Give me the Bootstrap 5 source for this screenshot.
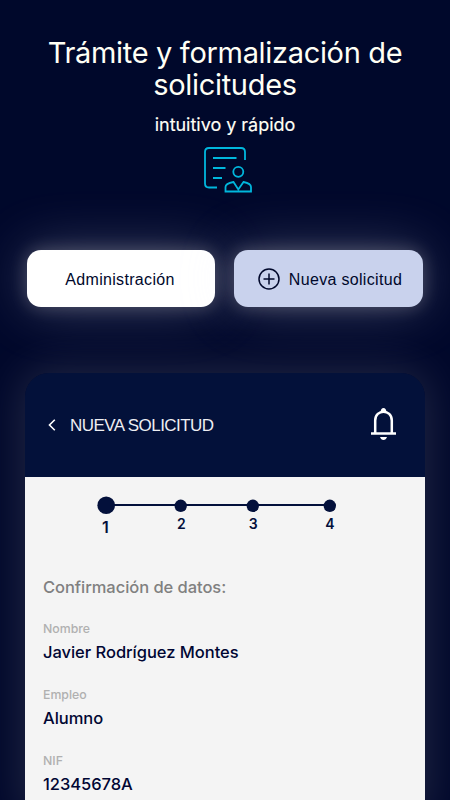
<!DOCTYPE html>
<html lang="es">
<head>
<meta charset="utf-8">
<meta name="viewport" content="width=device-width, initial-scale=1">
<title>Nueva solicitud</title>
<link href="https://cdn.jsdelivr.net/npm/bootstrap@5.3.0/dist/css/bootstrap.min.css" rel="stylesheet">
<style>
  body { background: #00082b; font-family: Inter, sans-serif; color: #000633; }
  .stage { width: 450px; height: 800px; }
  .hero { height: 250px; padding-top: 37px; color: #fffff5; }
  .hero h1 { font-size: 29px; line-height: 32px; font-weight: 400; letter-spacing: -.32px; }
  .hero-sub { font-size: 18px; line-height: 22px; margin-top: 13px; letter-spacing: -.02px; -webkit-text-stroke: .15px #fffff5; }
  .hero-icon { margin-top: 10px; transform: translateX(3px); }
  .actions { gap: 19px; padding: 0 27px; }
  .action { height: 57px; flex: 0 0 188px; border: 0; border-radius: 14px; padding: 0; font: 400 16px/20px "Liberation Sans", Arial, sans-serif; letter-spacing: .32px; color: #00082b; background: #fff; box-shadow: 0 0 18px rgba(255,248,240,.24), 0 0 56px rgba(235,235,255,.25); }
  .action:first-child { padding: 2px 2px 0 0; }
  .action-new { flex-basis: 189px; padding-left: 2px; background: #c9d2ed; }
  .action-new span { padding-top: 2px; }
  .phone { width: 400px; height: 440px; margin: 66px 25px 0; border-radius: 24px 24px 0 0; box-shadow: 0 0 44px 4px rgba(255,248,240,.13); background: linear-gradient(#03113a 104px, #f4f4f4 104px); }
  .phone-head { height: 104px; padding: 0 28px 0 23px; color: #fff; }
  .phone-title { font: 400 17px/20px "Liberation Sans", Arial, sans-serif; letter-spacing: -.55px; color: #eeeef2; padding-left: 14px; padding-top: 1px; }
  .steps { height: 100px; }
  .form-title { font-size: 16.5px; line-height: 21px; font-weight: 500; color: #808080; letter-spacing: -.05px; }
  .data { padding-left: 18px; }
  .field { height: 66px; }
  .field dt { font-size: 12.3px; line-height: 16px; font-weight: 500; color: #b0b0b0; }
  .field dd { font-size: 16.5px; line-height: 21px; font-weight: 500; margin: 5px 0 0; letter-spacing: -.03px; }
  dl { padding-top: 23px; }
</style>
<script src="https://cdn.jsdelivr.net/npm/bootstrap@5.3.0/dist/js/bootstrap.bundle.min.js"></script>
</head>
<body class="overflow-hidden">
<main class="stage overflow-hidden">
  <header class="hero text-center">
    <h1 class="m-0">Trámite y formalización de<br>solicitudes</h1>
    <p class="hero-sub mb-0">intuitivo y rápido</p>
    <svg class="hero-icon d-block mx-auto" width="50" height="48" viewBox="203 146 50 48" fill="none" stroke="#00b7dd" stroke-width="1.800">
      <path d="M217 187.500H209Q205 187.500 205 183.500V152Q205 148 209 148H241Q245 148 245 152V160"/>
      <path d="M213 158H236.500M213 168H225.500M213 178H222"/>
      <circle cx="238.300" cy="171.800" r="5"/>
      <path d="M233.500 182Q225.500 183.500 225.500 187V191.500H251V187Q251 183.500 243.500 182L238.300 189.500Z"/>
    </svg>
  </header>
  <div class="actions d-flex">
    <button class="action btn">Administración</button>
    <button class="action action-new btn d-flex align-items-center justify-content-center">
      <svg width="24" height="24" class="me-2" viewBox="0 0 24 24" fill="none" stroke="#00082b" stroke-width="1.500"><circle cx="12" cy="12" r="10"/><path d="M12 6.500V17.500M6.500 12H17.500"/></svg>
      <span>Nueva solicitud</span>
    </button>
  </div>
  <section class="phone">
    <div class="phone-head d-flex align-items-center">
      <svg width="8" height="12" viewBox="0 0 8 12" fill="none" stroke="#fff" stroke-width="1.600"><path d="M6.800 .8L1.500 6L6.800 11.200"/></svg>
      <span class="phone-title">NUEVA SOLICITUD</span>
      <svg class="ms-auto" width="28" height="34" viewBox="369 408 28 34" fill="none" stroke="#fff" stroke-width="2.500">
        <path d="M375.200 433V420.500C375.200 408.800 391.800 408.800 391.800 420.500V433"/>
        <path d="M371 433.500H396"/>
        <path d="M380.500 412Q381 408 383.500 408Q386 408 386.500 412ZM380 437H387Q386 440 383.500 440Q381 440 380 437Z" fill="#fff" stroke="none"/>
      </svg>
    </div>
    <div class="steps">
      <svg class="d-block" width="400" height="100" viewBox="25 477 400 100" font-family="Inter, sans-serif" font-size="14" font-weight="600" text-anchor="middle" fill="#03103b">
        <path d="M106 505H330" stroke="#03103b" stroke-width="2"/>
        <circle cx="106.200" cy="505.300" r="8.800"/><circle cx="180.700" cy="505.800" r="6.200"/><circle cx="252.800" cy="505.800" r="6.200"/><circle cx="329.800" cy="505.800" r="6.200"/>
        <text x="105.500" y="533" font-size="16">1</text><text x="181.300" y="528.500">2</text><text x="253.300" y="528.500">3</text><text x="330" y="528.500">4</text>
      </svg>
    </div>
    <div class="data">
      <h2 class="form-title mb-0">Confirmación de datos:</h2>
      <dl class="mb-0">
        <div class="field"><dt>Nombre</dt><dd>Javier Rodríguez Montes</dd></div>
        <div class="field"><dt>Empleo</dt><dd>Alumno</dd></div>
        <div class="field"><dt>NIF</dt><dd>12345678A</dd></div>
      </dl>
    </div>
  </section>
</main>
</body>
</html>
